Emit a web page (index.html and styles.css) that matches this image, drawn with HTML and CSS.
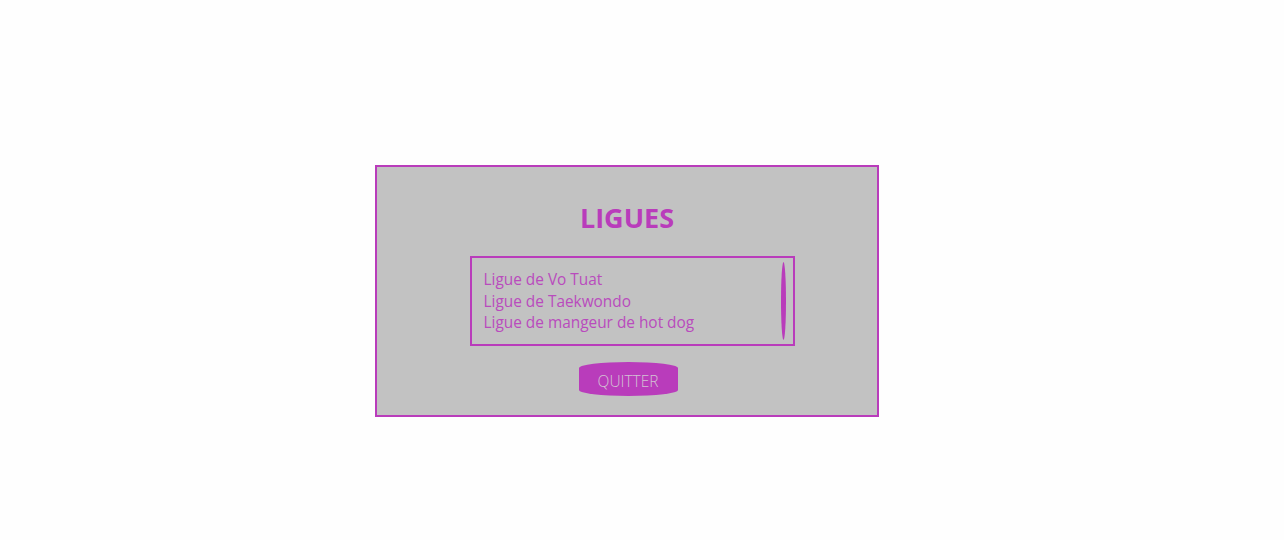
FILE: index.html
```html
<!DOCTYPE html>
<html lang="fr">
<head>
<meta charset="utf-8">
<title>Ligues</title>
<link rel="stylesheet" href="styles.css">
</head>
<body>
<main class="page">
  <section class="panel">
    <h1 class="title">LIGUES</h1>
    <div class="list">
      <ul class="items">
        <li>Ligue de Vo Tuat</li>
        <li>Ligue de Taekwondo</li>
        <li>Ligue de mangeur de hot dog</li>
      </ul>
      <div class="scrollbar"></div>
    </div>
    <button class="quit" type="button">QUITTER</button>
  </section>
</main>
</body>
</html>
```

FILE: styles.css
```css
* { box-sizing: border-box; }
html, body { margin: 0; padding: 0; background: #fefefe; }
body { font-family: "Open Sans", "Noto Sans", sans-serif; }
.page {
  width: 1284px;
  height: 540px;
  padding-top: 165px;
  padding-left: 375px;
}
.panel {
  width: 504px;
  height: 252px;
  border: 2px solid #b93cbb;
  background: #c2c2c2;
  display: flex;
  flex-direction: column;
  align-items: center;
}
.title {
  margin: 33px 0 0 0;
  font-size: 27px;
  line-height: 36px;
  font-weight: 700;
  color: #b93cbb;
  letter-spacing: 0;
}
.list {
  margin-top: 20px;
  margin-left: 10px;
  width: 325px;
  height: 90px;
  border: 2px solid #b93cbb;
  display: flex;
  justify-content: space-between;
  padding: 10px 7px 4px 12px;
}
.items {
  list-style: none;
  margin: 0;
  padding: 1px 0 0 0;
  color: #b94bbd;
  font-size: 15.4px;
  line-height: 21.5px;
}
.scrollbar {
  width: 5px;
  height: 78px;
  margin-top: -6px;
  border-radius: 50%;
  background: #b93cbb;
}
.quit {
  margin-top: 16px;
  margin-left: 2px;
  width: 99px;
  height: 34px;
  border: none;
  border-radius: 50% / 6px;
  background: #b93cbb;
  color: #d3c3d3;
  font-family: "Open Sans", "Noto Sans", sans-serif;
  font-size: 15.5px;
  font-weight: 300;
  padding: 3px 0 0 0;
}
```
